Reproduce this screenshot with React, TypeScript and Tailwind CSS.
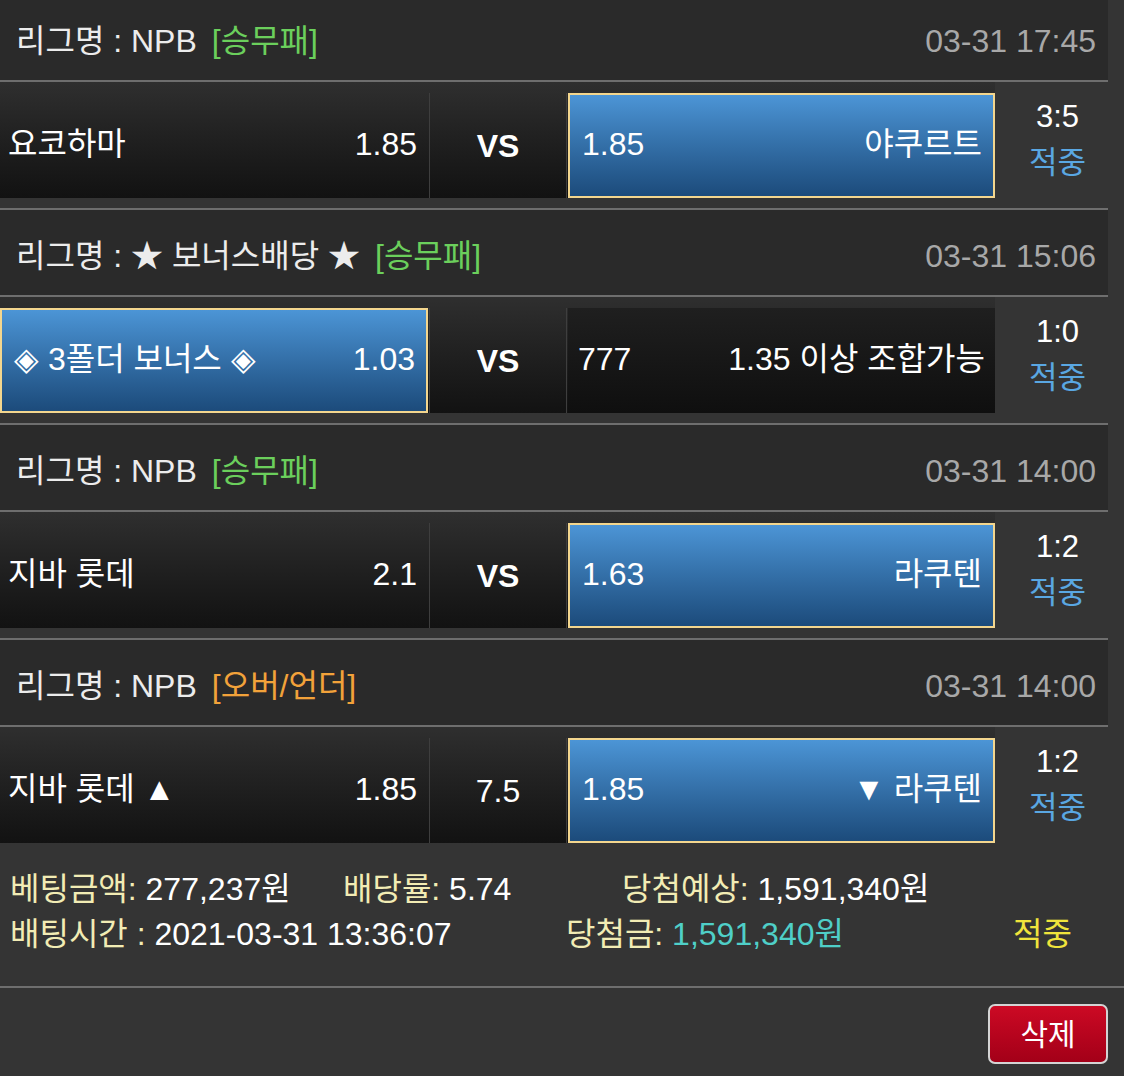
import React from 'react';

type Match = {
  league: string;
  type: string;
  typeColor: string;
  time: string;
  home: string;
  homeOdd: string;
  mid: string;
  midBold: boolean;
  away: string;
  awayOdd: string;
  pick: 'home' | 'away';
  score: string;
};

const matches: Match[] = [
  {
    league: 'NPB',
    type: '[승무패]',
    typeColor: 'text-[#6bcf5c]',
    time: '03-31 17:45',
    home: '요코하마',
    homeOdd: '1.85',
    mid: 'VS',
    midBold: true,
    away: '야쿠르트',
    awayOdd: '1.85',
    pick: 'away',
    score: '3:5'
  },
  {
    league: '★ 보너스배당 ★',
    type: '[승무패]',
    typeColor: 'text-[#6bcf5c]',
    time: '03-31 15:06',
    home: '◈ 3폴더 보너스 ◈',
    homeOdd: '1.03',
    mid: 'VS',
    midBold: true,
    away: '1.35 이상 조합가능',
    awayOdd: '777',
    pick: 'home',
    score: '1:0'
  },
  {
    league: 'NPB',
    type: '[승무패]',
    typeColor: 'text-[#6bcf5c]',
    time: '03-31 14:00',
    home: '지바 롯데',
    homeOdd: '2.1',
    mid: 'VS',
    midBold: true,
    away: '라쿠텐',
    awayOdd: '1.63',
    pick: 'away',
    score: '1:2'
  },
  {
    league: 'NPB',
    type: '[오버/언더]',
    typeColor: 'text-[#f2a23a]',
    time: '03-31 14:00',
    home: '지바 롯데 ▲',
    homeOdd: '1.85',
    mid: '7.5',
    midBold: false,
    away: '▼ 라쿠텐',
    awayOdd: '1.85',
    pick: 'away',
    score: '1:2'
  }
];

const Divider = () => (
  <div className="flex w-[3px] flex-col pt-[11px]">
    <div className="mx-auto h-full w-px bg-[#3e3e3e]" />
  </div>
);

const Cell = ({
  left,
  right,
  selected,
  dark,
  width,
  leftPad
}: {
  left: string;
  right: string;
  selected: boolean;
  dark?: boolean;
  width: string;
  leftPad: string;
}) => (
  <div className={`flex flex-col pt-[11px] ${width}`}>
    <div
      className={`flex h-full items-center justify-between text-[32px] text-white ${
        selected
          ? 'border-2 border-[#f3d68e] bg-linear-to-b from-[#4c95d6] to-[#1c4b7b] pb-[3px] pl-[12px] pr-[11px]'
          : dark
          ? `bg-linear-to-b from-[#1f1f1f] to-[#0f0f0f] pb-[3px] ${leftPad} pr-[10px]`
          : `pb-[3px] ${leftPad} pr-[11px]`
      }`}
    >
      <span>{left}</span>
      <span>{right}</span>
    </div>
  </div>
);

const Header = ({ m, first }: { m: Match; first: boolean }) => (
  <div
    className={`flex w-[1108px] items-center justify-between bg-[#2a2a2a] pl-[16px] pr-[12px] text-[32px] ${
      first ? 'h-[80px] pt-[1px]' : 'h-[85px] pt-[6px]'
    }`}
  >
    <div className="flex items-center gap-[15px] text-[#ececec]">
      <span>리그명 : {m.league}</span>
      <span className={m.typeColor}>{m.type}</span>
    </div>
    <span className="text-[#a8a8a8]">{m.time}</span>
  </div>
);

const Row = ({ m }: { m: Match }) => (
  <div className="flex h-[126px] w-[1108px] flex-col">
    <div className="flex h-[116px]">
      <div className="flex w-[995px] bg-linear-to-b from-[#2f2f2f] to-[#121212]">
        <Cell
          left={m.home}
          right={m.homeOdd}
          selected={m.pick === 'home'}
          width="w-[428px]"
          leftPad="pl-[8px]"
        />
        <Divider />
        <div className="flex w-[134px] flex-col pt-[11px]">
          <div
            className={`flex h-full items-center justify-center text-white ${
              m.midBold ? 'text-[32px] font-bold' : 'text-[32px]'
            }`}
          >
            {m.mid}
          </div>
        </div>
        <Divider />
        <Cell
          left={m.awayOdd}
          right={m.away}
          selected={m.pick === 'away'}
          dark={m.pick === 'home'}
          width="w-[427px]"
          leftPad="pl-[10px]"
        />
      </div>
      <div className="flex w-[113px] flex-col items-center justify-center pl-[12px] leading-[46px]">
        <span className="text-[31px] text-white">{m.score}</span>
        <span className="text-[31px] text-[#5aa7e2]">적중</span>
      </div>
    </div>
    <div className="h-[10px]" />
  </div>
);

export default function App() {
  return (
    <div className="min-h-[1076px] w-full bg-[#343434] font-['Liberation_Sans','Noto_Sans_CJK_KR',sans-serif]">
      {matches.map((m, i) => (
        <div key={i}>
          <Header m={m} first={i === 0} />
          <div className="h-[2px] w-[1108px] bg-[#6e6e6e]" />
          {i < matches.length - 1 ? (
            <>
              <Row m={m} />
              <div className="h-[2px] w-[1108px] bg-[#6e6e6e]" />
            </>
          ) : (
            <div className="h-[116px] overflow-hidden">
              <Row m={m} />
            </div>
          )}
        </div>
      ))}

      <div className="h-[143px] pl-[10px] pt-[24px] text-[32px] leading-[45px]">
        <div className="flex">
          <span className="w-[333px] text-[#f2ecb4]">
            베팅금액: <span className="text-white">277,237원</span>
          </span>
          <span className="w-[279px] text-[#f2ecb4]">
            배당률: <span className="text-white">5.74</span>
          </span>
          <span className="text-[#f2ecb4]">
            당첨예상: <span className="text-white">1,591,340원</span>
          </span>
        </div>
        <div className="flex">
          <span className="w-[556px] text-[#f2ecb4]">
            배팅시간 : <span className="text-white">2021-03-31 13:36:07</span>
          </span>
          <span className="w-[447px] text-[#f2ecb4]">
            당첨금: <span className="text-[#4fcfc8]">1,591,340원</span>
          </span>
          <span className="text-[#f0e43c]">적중</span>
        </div>
      </div>
      <div className="h-[2px] w-full bg-[#6e6e6e]" />
      <div className="flex h-[86px] justify-end pr-[16px] pt-[16px]">
        <button className="flex h-[60px] w-[120px] items-center justify-center rounded-[7px] border-2 border-[#d4d4d4] bg-linear-to-b from-[#cc0a24] to-[#a30018] text-[30px] text-white">
          삭제
        </button>
      </div>
    </div>
  );
}
